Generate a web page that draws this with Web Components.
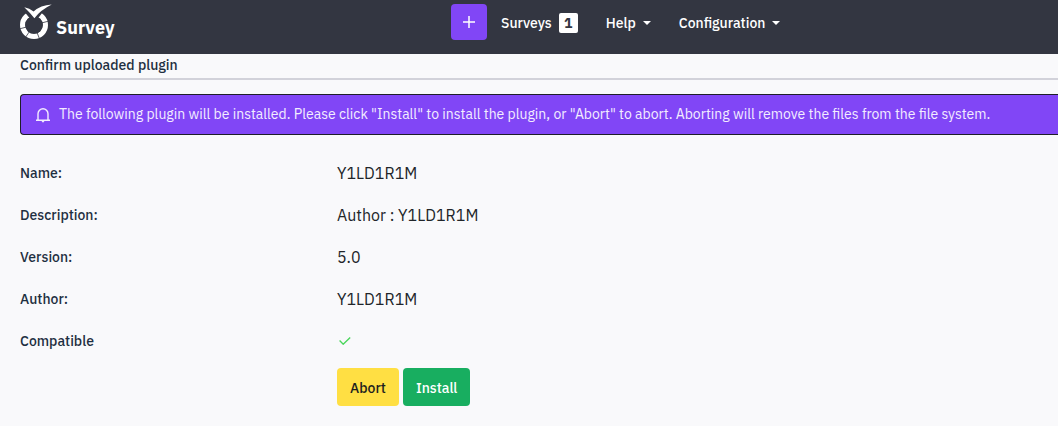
<!DOCTYPE html>
<html lang="en">
<head>
<meta charset="utf-8">
<meta name="viewport" content="width=device-width, initial-scale=1">
<title>Confirm uploaded plugin</title>
<style>
    body {
        margin: 0;
        background: #f9f9fb;
        color: #212529;
        font-family: "IBM Plex Sans", Roboto, "Liberation Sans", sans-serif;
        font-size: 16px;
        line-height: 24px;
        overflow-x: hidden;
    }
</style>
</head>
<body>

<survey-navbar brand="Survey">
    <nav-item label="Surveys" count="1"></nav-item>
    <nav-item label="Help" dropdown></nav-item>
    <nav-item label="Configuration" dropdown></nav-item>
</survey-navbar>

<plugin-page>
    <span slot="title">Confirm uploaded plugin</span>
    <alert-box slot="alert">The following plugin will be installed. Please click "Install" to install the plugin, or "Abort" to abort. Aborting will remove the files from the file system.</alert-box>
    <detail-row label="Name:">Y1LD1R1M</detail-row>
    <detail-row label="Description:">Author : Y1LD1R1M</detail-row>
    <detail-row label="Version:">5.0</detail-row>
    <detail-row label="Author:">Y1LD1R1M</detail-row>
    <detail-row label="Compatible"><check-icon></check-icon></detail-row>
    <action-button slot="actions" kind="warning">Abort</action-button>
    <action-button slot="actions" kind="success">Install</action-button>
</plugin-page>

<script type="module">

/**
 * base for all elements: clones the template in an open shadow root
 */
class BaseElement extends HTMLElement {

    constructor() {
        super()
        this.attachShadow({mode: 'open'})
    }

    connectedCallback() {
        const template = document.createElement('template')
        template.innerHTML = this.render()
        this.shadowRoot.replaceChildren(template.content.cloneNode(true))
    }

    attr(name) {
        return this.getAttribute(name) || ''
    }
}

class SurveyNavbar extends BaseElement {

    render() {
        return /*html*/`
<style>
    :host {
        display: block;
        background: #333641;
        color: #fff;
    }
    header {
        display: grid;
        grid-template-columns: 431px 1fr;
        height: 54px;
        padding: 0 20px;
        box-sizing: border-box;
    }
    .brand {
        display: flex;
        align-items: flex-start;
        gap: 4px;
        padding-top: 4px;
        justify-self: start;
        color: inherit;
        text-decoration: none;
        font-size: 18px;
        font-weight: 700;
    }
    .brand span {
        padding-top: 12px;
    }
    nav {
        display: flex;
        align-items: center;
        gap: 28px;
        height: 36px;
        padding-top: 4px;
    }
    .create {
        display: flex;
        align-items: center;
        justify-content: center;
        width: 36px;
        height: 36px;
        margin-right: -14px;
        padding: 0;
        border: 0;
        border-radius: 4px;
        background: #8146f6;
        color: #fff;
        cursor: pointer;
    }
</style>
<header>
    <a class="brand" href="#">
        <svg width="32" height="36" viewBox="0 0 32 36" aria-hidden="true">
            <circle cx="14" cy="21" r="11.4" fill="none" stroke="#fff" stroke-width="5.200"/>
            <path d="M5 8.500 14 19.500 22.500 8.500 20 0H3Z" fill="#333641"/>
            <path d="M14 21-1 25M14 21 20 36M14 21 29 17M14 21 5 34" stroke="#333641" stroke-width=".8"/>
            <circle cx="14" cy="21" r="8.800" fill="#333641"/>
            <path d="M4.300 3.200Q9.500 4 13.600 7.600 20.500 1.200 31.800.6 21 5.800 14.400 14.200 9.800 8.400 4.300 3.200Z" fill="#fff"/>
        </svg>
        <span>${this.attr('brand')}</span>
    </a>
    <nav>
        <button class="create" type="button" aria-label="Create">
            <svg width="12" height="12" viewBox="0 0 12 12" fill="none" stroke="currentColor" stroke-width="1.500"><path d="M6 0v12M0 6h12"/></svg>
        </button>
        <slot></slot>
    </nav>
</header>`
    }
}

class NavItem extends BaseElement {

    render() {
        const count = this.attr('count')
        return /*html*/`
<style>
    :host {
        display: block;
        padding-top: 2px;
        font-size: 14px;
        font-weight: 500;
        line-height: 20px;
    }
    a {
        display: flex;
        align-items: center;
        gap: 7px;
        color: #fff;
        text-decoration: none;
    }
    .count {
        width: 19px;
        border-radius: 2px;
        background: #fff;
        color: #333641;
        font-weight: 700;
        text-align: center;
    }
</style>
<a href="#">${this.attr('label')}
    ${count ? `<span class="count">${count}</span>` : ''}
    ${this.hasAttribute('dropdown') ? '<svg width="8" height="4" viewBox="0 0 8 4" aria-hidden="true"><path d="M0 0h8L4 4Z" fill="currentColor"/></svg>' : ''}
</a>`
    }
}

class PluginPage extends BaseElement {

    render() {
        return /*html*/`
<style>
    :host {
        display: block;
        padding: 0 0 20px 20px;
    }
    h1 {
        margin: 0 0 14px;
        padding-bottom: 2px;
        border-bottom: 2px solid #d2d2da;
        color: #1e2f41;
        font-size: 14px;
        font-weight: 500;
        line-height: 22px;
    }
    .details {
        display: grid;
        gap: 18px;
        margin-top: 26px;
    }
    .actions {
        display: flex;
        gap: 4px;
        margin: 15px 0 0 317px;
    }
</style>
<h1><slot name="title"></slot></h1>
<slot name="alert"></slot>
<div class="details"><slot></slot></div>
<div class="actions"><slot name="actions"></slot></div>`
    }
}

class AlertBox extends BaseElement {

    render() {
        return /*html*/`
<style>
    /* runs to the window edge, so the right side stays open */
    :host {
        display: flex;
        align-items: center;
        gap: 9px;
        padding: 9px 0 9px 15px;
        border: 1px solid #1e1e28;
        border-right: 0;
        border-radius: 4px 0 0 4px;
        background: #8146f6;
        color: #f3edff;
        font-size: 14px;
        line-height: 21px;
    }
    svg {
        flex: none;
    }
</style>
<svg width="14" height="16" viewBox="0 0 14 16" fill="none" stroke="currentColor" stroke-width="1.400" aria-hidden="true">
    <path d="M2 13V6.700a5 5 0 0 1 10 0V13M0 13.200h14"/>
    <path d="M5.300 13.800h3.400L7 15.800Z" fill="currentColor" stroke="none"/>
</svg>
<div role="alert"><slot></slot></div>`
    }
}

class DetailRow extends BaseElement {

    render() {
        return /*html*/`
<style>
    :host {
        display: grid;
        grid-template-columns: 317px 1fr;
    }
    .label {
        color: #1e2f41;
        font-size: 14px;
        font-weight: 500;
    }
</style>
<span class="label">${this.attr('label')}</span>
<span><slot></slot></span>`
    }
}

class CheckIcon extends BaseElement {

    render() {
        return /*html*/`
<style>
    :host {
        display: flex;
        align-items: center;
        height: 24px;
        padding-left: 2px;
    }
</style>
<svg width="12" height="8" viewBox="0 0 12 8" fill="none" stroke="#4bd65c" stroke-width="1.400" role="img" aria-label="Yes"><path d="M.6 3.600 4.200 7.200 11.200.5"/></svg>`
    }
}

class ActionButton extends BaseElement {

    render() {
        return /*html*/`
<style>
    :host {
        display: block;
        --back: #ffdf43;
        --front: #1e1e1e;
    }
    :host([kind="success"]) {
        --back: #18ae60;
        --front: #fff;
    }
    button {
        padding: 9px 13px 7px;
        border: 0;
        border-radius: 4px;
        background: var(--back);
        color: var(--front);
        font: inherit;
        font-size: 14px;
        font-weight: 500;
        line-height: 22px;
        cursor: pointer;
    }
    button:hover {
        opacity: .8;
    }
</style>
<button type="button"><slot></slot></button>`
    }
}

customElements.define('survey-navbar', SurveyNavbar)
customElements.define('nav-item', NavItem)
customElements.define('plugin-page', PluginPage)
customElements.define('alert-box', AlertBox)
customElements.define('detail-row', DetailRow)
customElements.define('check-icon', CheckIcon)
customElements.define('action-button', ActionButton)

</script>
</body>
</html>
